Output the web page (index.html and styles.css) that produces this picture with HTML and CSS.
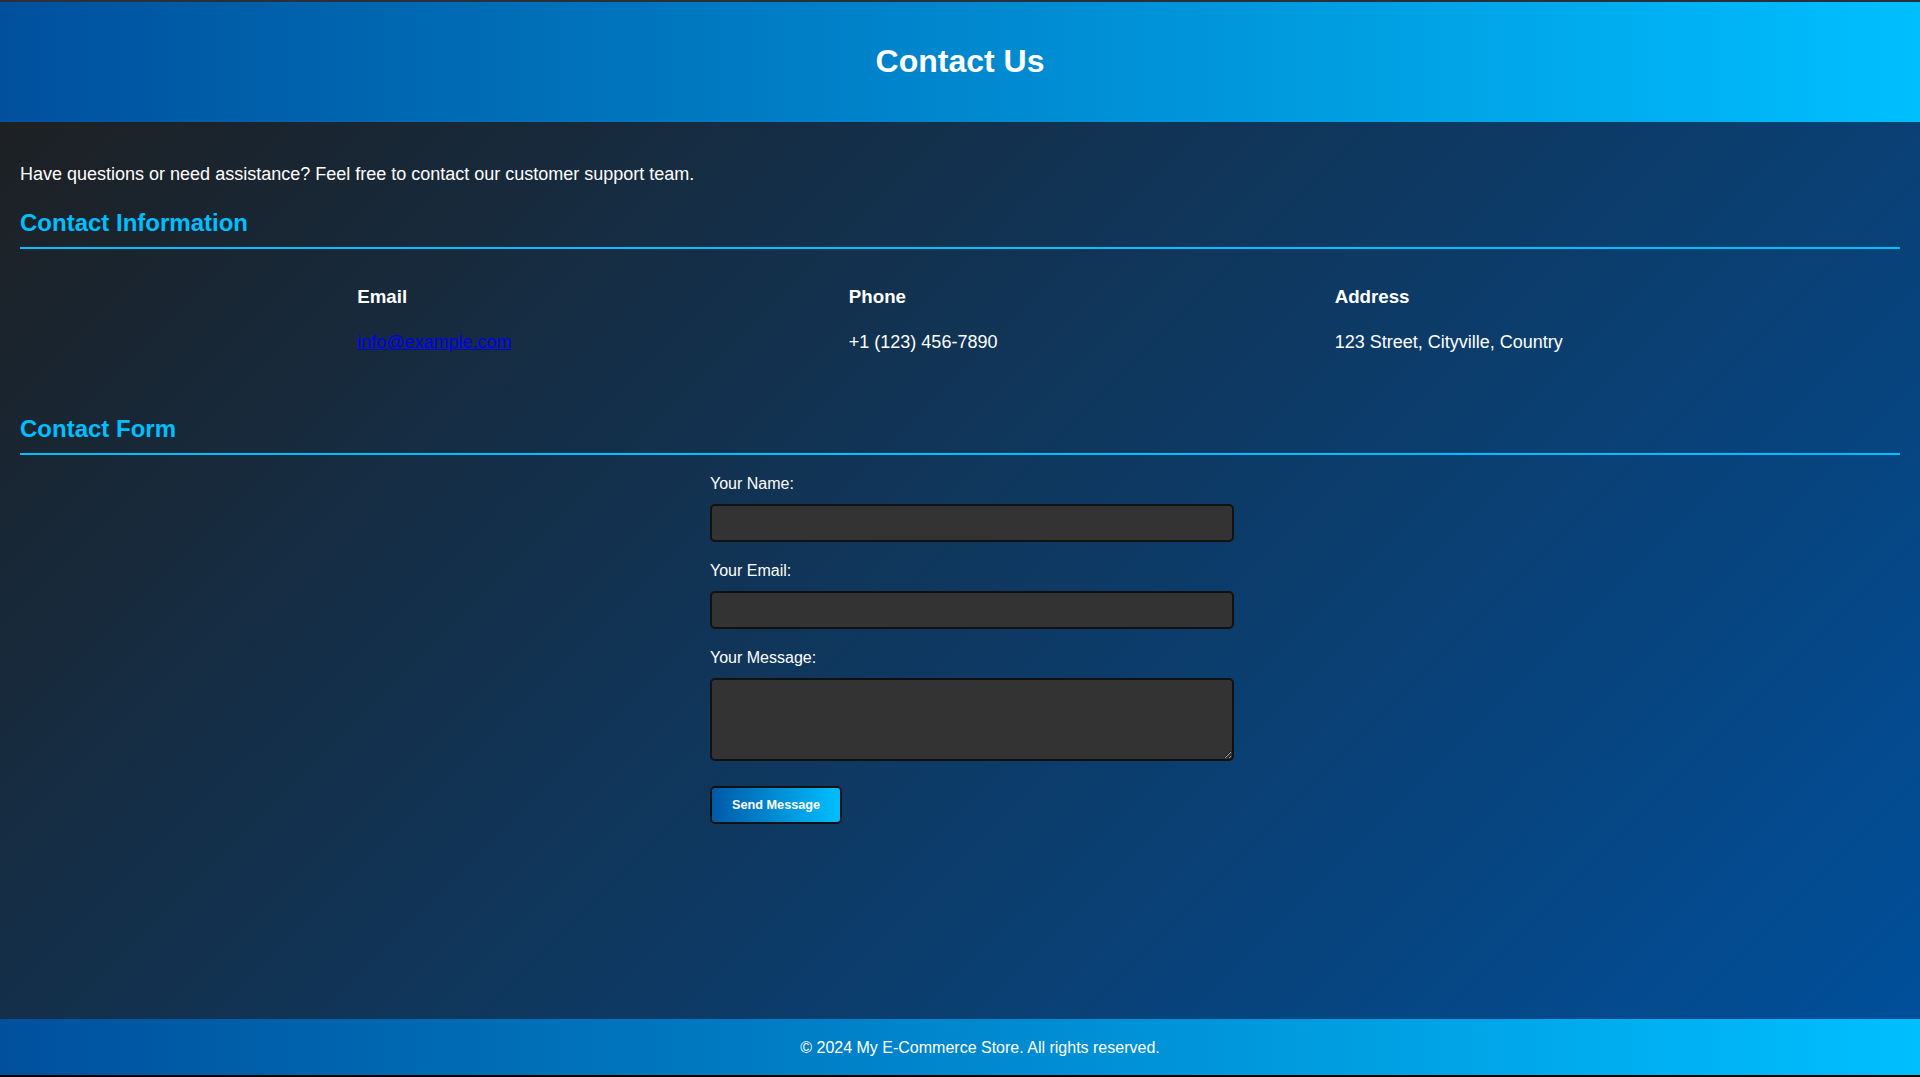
FILE: index.html
```html
<!DOCTYPE html>
<html lang="en">
<head>
<meta charset="utf-8">
<title>Contact Us</title>
<link rel="stylesheet" href="styles.css">
</head>
<body>
<header class="site-header">
  <h1 class="site-title">Contact Us</h1>
</header>
<main class="main">
  <p class="intro">Have questions or need assistance? Feel free to contact our customer support team.</p>
  <section class="section">
    <h2 class="section-title">Contact Information</h2>
    <div class="info-row">
      <div class="info-item">
        <h3 class="info-label">Email</h3>
        <p class="info-value"><a href="#" class="info-link">info@example.com</a></p>
      </div>
      <div class="info-item">
        <h3 class="info-label">Phone</h3>
        <p class="info-value">+1 (123) 456-7890</p>
      </div>
      <div class="info-item">
        <h3 class="info-label">Address</h3>
        <p class="info-value">123 Street, Cityville, Country</p>
      </div>
    </div>
  </section>
  <section class="section section-form">
    <h2 class="section-title">Contact Form</h2>
    <form class="contact-form">
      <label class="field-label" for="name">Your Name:</label>
      <input class="field-input" type="text" id="name">
      <label class="field-label" for="email">Your Email:</label>
      <input class="field-input" type="email" id="email">
      <label class="field-label" for="message">Your Message:</label>
      <textarea class="field-input field-textarea" id="message" rows="4"></textarea>
      <button class="send-btn" type="button">Send Message</button>
    </form>
  </section>
</main>
<footer class="site-footer">
  <p class="footer-text">&copy; 2024 My E-Commerce Store. All rights reserved.</p>
</footer>
</body>
</html>
```
FILE: styles.css
```css
* { box-sizing: border-box; }
html { background: #000; }
body {
  margin: 0;
  min-height: 100vh;
  display: flex;
  flex-direction: column;
  font-family: "Liberation Sans", Arial, sans-serif;
  color: #fff;
  background: linear-gradient(135deg, #1e1e1e, #00509d);
  border-top: 2px solid #29303c;
  border-bottom: 2px solid #000;
}
.site-header {
  background: linear-gradient(90deg, #00509d, #00bfff);
  height: 120px;
  padding-bottom: 2px;
  display: flex;
  align-items: center;
  justify-content: center;
}
.site-title {
  margin: 0;
  font-size: 32px;
  font-weight: bold;
}
.main {
  flex: 1;
  padding: 0 20px;
}
.intro {
  margin: 42px 0 0;
  font-size: 18px;
}
.section-title {
  margin: 24px 0 0;
  font-size: 24px;
  color: #00bfff;
  padding-bottom: 10px;
  border-bottom: 2px solid #00bfff;
}
.info-row {
  display: flex;
  justify-content: space-evenly;
  margin-top: 37px;
}
.info-label {
  margin: 0 0 24px;
  font-size: 18.72px;
}
.info-value {
  margin: 0;
  font-size: 18px;
}
.info-link { color: #0000ee; }
.section-form .section-title { margin-top: 62px; }
.contact-form {
  width: 500px;
  margin: 20px auto 0;
  display: flex;
  flex-direction: column;
  align-items: flex-start;
}
.field-label {
  font-size: 16px;
  margin-bottom: 11px;
}
.field-input {
  width: 524px;
  height: 38px;
  padding: 10px;
  border: 2px solid #111;
  border-radius: 5px;
  background: #333;
  color: #fff;
  font-family: "Liberation Sans", Arial, sans-serif;
  font-size: 13.33px;
  margin: 0 0 20px;
}
.field-textarea {
  height: 83px;
  margin-bottom: 25px;
  resize: vertical;
}
.send-btn {
  height: 38px;
  padding: 0 20px;
  border: 2px solid #111;
  border-radius: 5px;
  background: linear-gradient(90deg, #005aa8, #00bfff);
  color: #fff;
  font-family: "Liberation Sans", Arial, sans-serif;
  font-weight: bold;
  font-size: 12.7px;
}
.site-footer {
  background: linear-gradient(90deg, #00509d, #00bfff);
  height: 56px;
  padding: 2px 0 0 40px;
  display: flex;
  align-items: center;
  justify-content: center;
}
.footer-text {
  margin: 0;
  font-size: 16px;
}
```
